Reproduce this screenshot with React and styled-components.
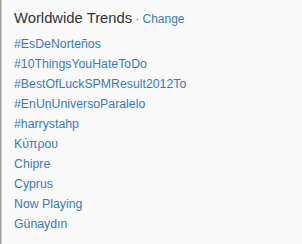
import React from 'react';
import styled, { createGlobalStyle } from 'styled-components';

const GlobalStyle = createGlobalStyle`
  html, body { margin: 0; padding: 0; background: #f9f9f9; }
  body { font-family: "Helvetica Neue", "Liberation Sans", Arial, sans-serif; }
`;

/**
 * Trends module card
 */
const Card = styled.div`
  width: 302px;
  height: 244px;
  box-sizing: border-box;
  background: #f9f9f9;
  border-left: 1px solid #9c9c9c;
  box-shadow: inset 1px 0 0 #cfcfcf;
  padding: 10px 0 0 13px;
`;

const Header = styled.div`
  display: flex;
  align-items: baseline;
  gap: 3px;
  height: 20px;
`;

const Title = styled.h3`
  margin: 0;
  font-size: 14.8px;
  font-weight: normal;
  color: #333;
`;

const Dot = styled.span`
  font-size: 13px;
  color: #666;
`;

const ChangeLink = styled.a`
  font-size: 12px;
  color: #3a7abf;
  text-decoration: none;
`;

const TrendList = styled.ul`
  list-style: none;
  margin: 4px 0 0;
  padding: 0;
`;

const Trend = styled.li`
  height: 20px;
  line-height: 20px;
  font-size: 12.3px;
  color: #3a7abf;
`;

export default function App() {
  const trends = [
    '#EsDeNorteños',
    '#10ThingsYouHateToDo',
    '#BestOfLuckSPMResult2012To',
    '#EnUnUniversoParalelo',
    '#harrystahp',
    'Κύπρου',
    'Chipre',
    'Cyprus',
    'Now Playing',
    'Günaydın',
  ];

  return (
    <>
      <GlobalStyle />
      <Card>
        <Header>
          <Title>Worldwide Trends</Title>
          <Dot>·</Dot>
          <ChangeLink href="#">Change</ChangeLink>
        </Header>
        <TrendList>
          {trends.map((t, idx) => (
            <Trend key={idx}>{t}</Trend>
          ))}
        </TrendList>
      </Card>
    </>
  );
}
